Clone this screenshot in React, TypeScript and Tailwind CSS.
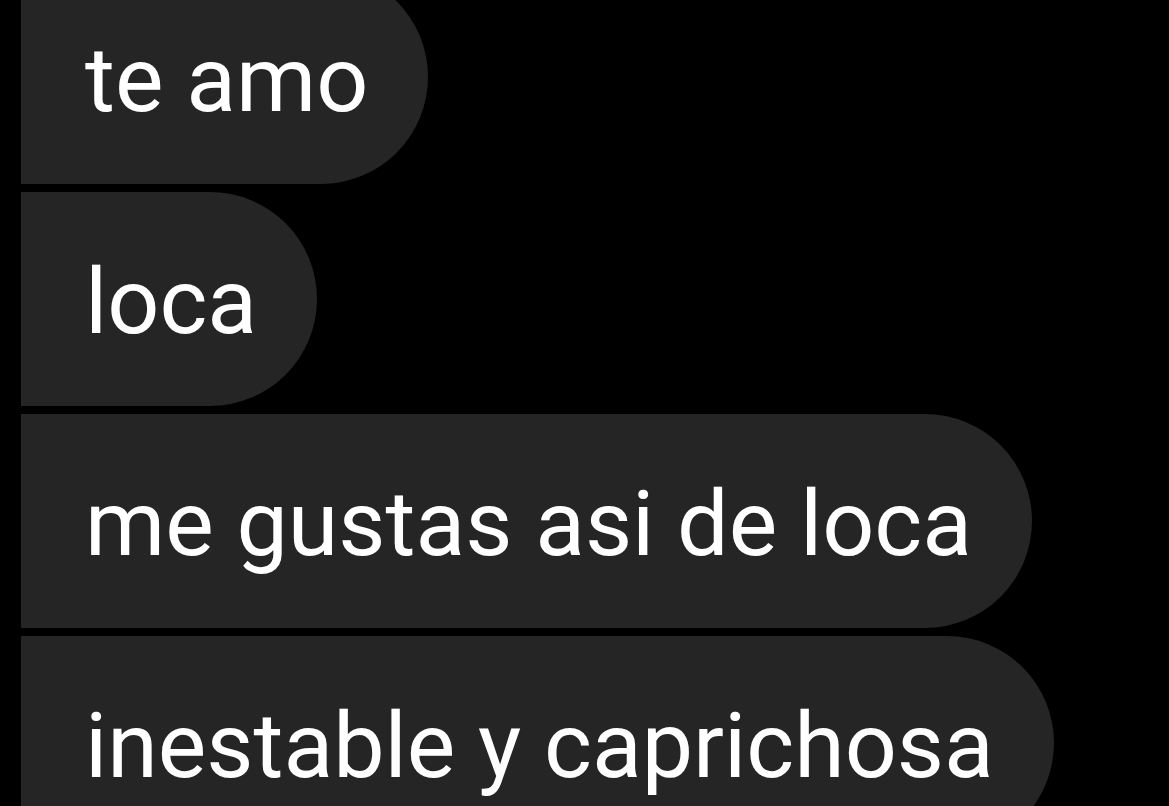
const messages = [
    { text: 'te amo', first: true },
    { text: 'loca' },
    { text: 'me gustas asi de loca' },
    { text: 'inestable y caprichosa' },
];

export default function App() {
    return (
        <div className="h-[806px] w-[1169px] overflow-hidden bg-black">
            <div className="-mt-[30px] flex flex-col items-start gap-[8px] pl-[21px]">
                {messages.map((m) => (
                    <div
                        key={m.text}
                        className={
                            m.first
                                ? 'flex h-[214px] items-center rounded-r-full rounded-tl-[100px] rounded-bl-[8px] bg-[#252525] pl-[64px] pr-[60px]'
                                : 'flex h-[214px] items-center rounded-r-full rounded-l-[8px] bg-[#252525] pl-[64px] pr-[60px]'
                        }
                    >
                        <span className="whitespace-nowrap pt-[6px] font-['Roboto',sans-serif] text-[91.5px] leading-none text-white">
                            {m.text}
                        </span>
                    </div>
                ))}
            </div>
        </div>
    );
}
